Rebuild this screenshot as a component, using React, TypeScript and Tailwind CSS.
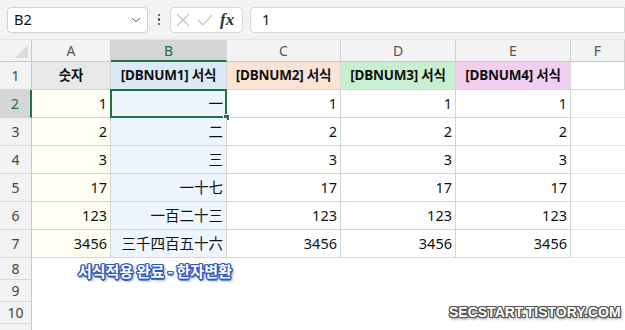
import { ChevronDown } from 'lucide-react';

const cols = [
  { key: 'A', w: 'w-[79px]' },
  { key: 'B', w: 'w-[116px]' },
  { key: 'C', w: 'w-[114px]' },
  { key: 'D', w: 'w-[115px]' },
  { key: 'E', w: 'w-[115px]' },
  { key: 'F', w: 'flex-1' },
];

const headers = [
  { text: '숫자', bg: 'bg-[#e8e8e8]' },
  { text: '[DBNUM1] 서식', bg: 'bg-[#dce9f7]' },
  { text: '[DBNUM2] 서식', bg: 'bg-[#fbe3d6]' },
  { text: '[DBNUM3] 서식', bg: 'bg-[#c8efcf]' },
  { text: '[DBNUM4] 서식', bg: 'bg-[#f2cff0]' },
];

const values = [
  ['1', '一'],
  ['2', '二'],
  ['3', '三'],
  ['17', '一十七'],
  ['123', '一百二十三'],
  ['3456', '三千四百五十六'],
];

const line = 'border-r border-b border-[#d5d5d5]';

const RowHead = ({ n, h, selected }: { n?: number; h: string; selected?: boolean }) => (
  <div
    className={`w-[32px] ${h} shrink-0 flex items-center justify-center text-[14px] border-b border-[#d5d5d5] ${
      selected
        ? 'bg-[#d6d6d6] text-[#1d6b3f] border-r-2 border-r-[#217346]'
        : 'bg-[#f3f3f3] text-[#444] border-r border-r-[#c8c8c8]'
    }`}
  >
    {n}
  </div>
);

const App = () => {
  return (
    <div
      className="w-[625px] h-[330px] overflow-hidden bg-white relative text-[#111]"
      style={{ fontFamily: '"Noto Sans", "Noto Sans CJK KR", sans-serif' }}
    >
      {/* formula bar */}
      <div className="h-[40px] bg-[#f3f3f3] flex items-center gap-[7px] pl-[7px] border-b border-[#e2e2e2]">
        <div className="w-[141px] h-[26px] bg-white border border-[#d0d0d0] rounded-[4px] flex items-center justify-between pl-[6px] pr-[4px] text-[14.5px]">
          <span>B2</span>
          <ChevronDown size={14} strokeWidth={1.6} className="text-[#444]" />
        </div>
        <div className="flex flex-col gap-[2px] items-center w-[8px]">
          <span className="w-[2.5px] h-[2.5px] bg-[#444] rounded-full" />
          <span className="w-[2.5px] h-[2.5px] bg-[#444] rounded-full" />
          <span className="w-[2.5px] h-[2.5px] bg-[#444] rounded-full" />
        </div>
        <div className="w-[73px] h-[26px] bg-white border border-[#d8d8d8] rounded-[4px] flex items-center gap-[7px] pl-[5px]">
          <svg width="14" height="14" viewBox="0 0 14 14" stroke="#c4c4c4" strokeWidth="1.2" fill="none">
            <path d="M1 1 L13 13 M13 1 L1 13" />
          </svg>
          <svg width="16" height="14" viewBox="0 0 16 14" stroke="#c4c4c4" strokeWidth="1.2" fill="none">
            <path d="M1 7 L6 12 L15 2" />
          </svg>
          <span
            className="italic text-[17px] text-[#333] leading-none font-bold"
            style={{ fontFamily: '"Liberation Serif", serif' }}
          >
            fx
          </span>
        </div>
        <div className="flex-1 h-[26px] bg-white border border-[#d8d8d8] rounded-l-[4px] flex items-center pl-[11px] text-[14.5px]">
          1
        </div>
      </div>

      {/* column headers */}
      <div className="flex h-[22px]">
        <div className="w-[32px] shrink-0 bg-[#f3f3f3] border-r border-b border-[#c8c8c8] relative overflow-hidden">
          <div className="absolute right-[3px] bottom-[3px] w-0 h-0 border-l-[13px] border-l-transparent border-b-[13px] border-b-[#dcdcdc]" />
        </div>
        {cols.map((c) => (
          <div
            key={c.key}
            className={`${c.w} shrink-0 flex items-center justify-center text-[14px] border-r border-r-[#d0d0d0] ${
              c.key === 'B'
                ? 'bg-[#d6d6d6] text-[#1d6b3f] border-b-2 border-b-[#217346]'
                : 'bg-[#f3f3f3] text-[#555] border-b border-b-[#c8c8c8]'
            }`}
          >
            {c.key}
          </div>
        ))}
      </div>

      {/* row 1 */}
      <div className="flex h-[28px]">
        <RowHead n={1} h="h-[28px]" />
        {headers.map((hd, i) => (
          <div
            key={hd.text}
            className={`${cols[i].w} shrink-0 ${hd.bg} ${line} flex items-center justify-center font-bold text-[13.5px] tracking-[-0.2px]`}
          >
            {hd.text}
          </div>
        ))}
        <div className={`flex-1 ${line}`} />
      </div>

      {/* rows 2-7 */}
      {values.map(([num, hanja], r) => (
        <div key={num} className="flex h-[28px]">
          <RowHead n={r + 2} h="h-[28px]" selected={r === 0} />
          <div className={`w-[79px] shrink-0 bg-[#fefff2] ${line} flex items-center justify-end pr-[3px] text-[14.5px]`}>
            {num}
          </div>
          <div className={`w-[116px] shrink-0 bg-[#eef5fc] ${line} flex items-center justify-end pr-[3px] text-[14.5px] relative`}>
            {hanja}
            {r === 0 && (
              <>
                <div className="absolute -left-[1px] -top-[1px] -right-[1px] -bottom-[1px] border-2 border-[#217346]" />
                <div className="absolute -right-[4px] -bottom-[4px] w-[7px] h-[7px] bg-[#217346] border border-white" />
              </>
            )}
          </div>
          <div className={`w-[114px] shrink-0 ${line} flex items-center justify-end pr-[3px] text-[14.5px]`}>{num}</div>
          <div className={`w-[115px] shrink-0 ${line} flex items-center justify-end pr-[3px] text-[14.5px]`}>{num}</div>
          <div className={`w-[115px] shrink-0 ${line} flex items-center justify-end pr-[3px] text-[14.5px]`}>{num}</div>
          <div className="flex-1 border-b border-[#e6e6e6]" />
        </div>
      ))}

      {/* rows 8-10, plus the top of row 11 */}
      {[8, 9, 10].map((n) => (
        <div key={n} className="flex h-[22px]">
          <RowHead n={n} h="h-[22px]" />
          <div className="flex-1" />
        </div>
      ))}
      <div className="flex h-[22px]">
        <RowHead h="h-[22px]" />
        <div className="flex-1" />
      </div>

      {/* overlay captions */}
      <div
        className="absolute left-[78px] top-[260px] text-[15px] font-bold text-white"
        style={{
          fontFamily: '"Noto Sans CJK KR", sans-serif',
          textShadow:
            '1.5px 0 0 #2b5cc4, -1.5px 0 0 #2b5cc4, 0 1.5px 0 #2b5cc4, 0 -1.5px 0 #2b5cc4, 1px 1px 0 #2b5cc4, -1px -1px 0 #2b5cc4, 1px -1px 0 #2b5cc4, -1px 1px 0 #2b5cc4, 2px 2px 3px rgba(0,0,0,0.6)',
        }}
      >
        서식적용 완료 - 한자변환
      </div>
      <div
        className="absolute left-[449px] top-[302px] text-[14px] font-bold text-white"
        style={{
          fontFamily: '"Liberation Sans", sans-serif',
          textShadow:
            '1px 0 0 #555, -1px 0 0 #555, 0 1px 0 #555, 0 -1px 0 #555, 1px 1px 0 #555, -1px -1px 0 #555, 1px -1px 0 #555, -1px 1px 0 #555, 1px 2px 3px rgba(0,0,0,0.6)',
        }}
      >
        SECSTART.TISTORY.COM
      </div>
    </div>
  );
};

export default App;
